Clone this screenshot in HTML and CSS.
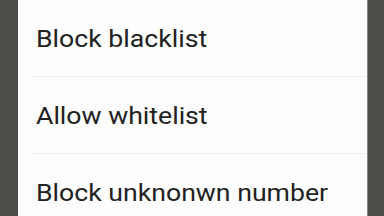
FILE: index.html
```html
<!DOCTYPE html>
<html lang="en">
<head>
    <meta charset="UTF-8">
    <meta name="viewport" content="width=device-width, initial-scale=1.0">
    <title>Block settings</title>
    <link rel="stylesheet" href="styles.css">
</head>
<body>
    <div class="screen">
        <div class="side left"></div>
        <div class="dialog">
            <div class="item"><span class="label">Block blacklist</span></div>
            <div class="item"><span class="label">Allow whitelist</span></div>
            <div class="item"><span class="label">Block unknonwn number</span></div>
        </div>
        <div class="side right"></div>
    </div>
</body>
</html>
```

FILE: styles.css
```css
body {
    margin: 0;
    font-family: Roboto, 'Noto Sans', sans-serif;
    background-color: #4e4c48;
    overflow: hidden;
}
.screen {
    display: flex;
    height: 216px;
}
.side {
    background-color: #4e4c48;
}
.left {
    width: 18px;
}
.right {
    width: 17px;
    border-left: 1px solid #8a8885;
    box-sizing: border-box;
}
.dialog {
    flex: 1;
    background-color: #fdfdfd;
    overflow: hidden;
}
.item {
    margin-left: 14px;
    padding: 25px 0 23px 4px;
    height: 28px;
    line-height: 28px;
    font-size: 24px;
    color: #222;
    border-bottom: 1px solid #efefef;
    white-space: nowrap;
}
.label {
    display: inline-block;
    transform: scaleX(1.11);
    transform-origin: left center;
}
```
